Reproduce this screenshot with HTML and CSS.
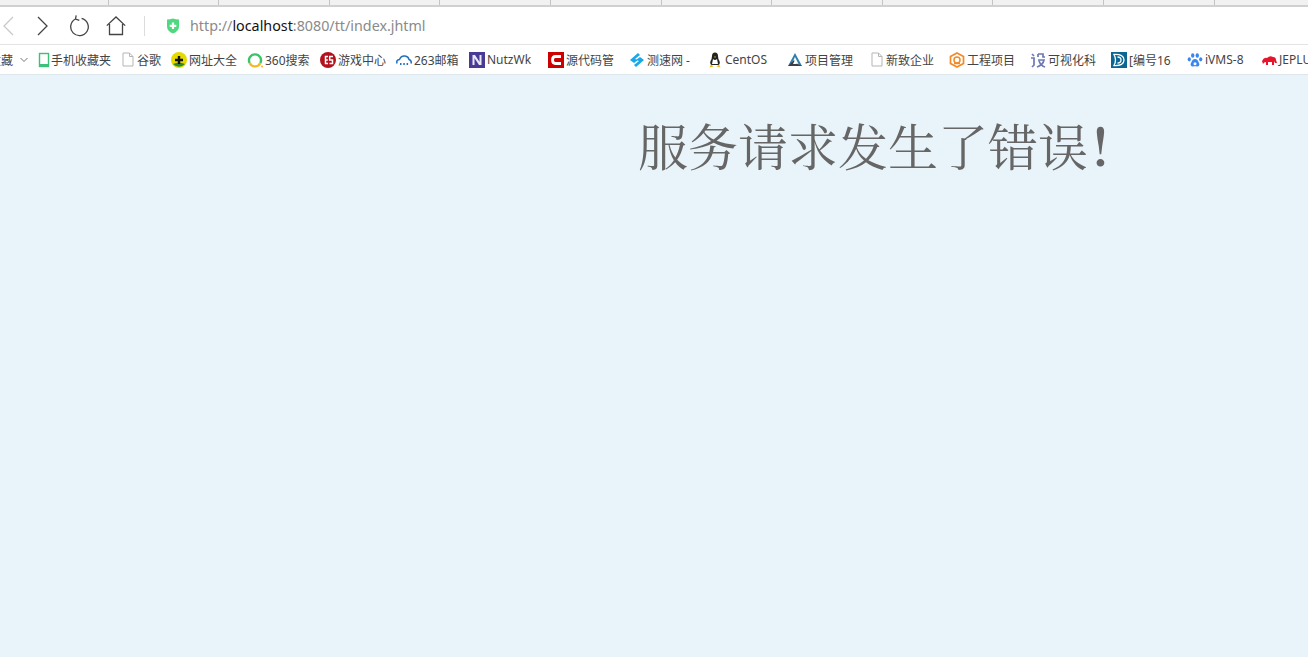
FILE: index.html
```html
<!DOCTYPE html>
<html lang="zh-CN">
<head>
<meta charset="utf-8">
<title>服务请求发生了错误</title>
<link rel="stylesheet" href="styles.css">
</head>
<body>
<div class="tabs">
  <div class="tab first"></div><div class="tab"></div><div class="tab"></div><div class="tab"></div><div class="tab"></div><div class="tab"></div><div class="tab"></div><div class="tab"></div><div class="tab"></div><div class="tab"></div><div class="tab"></div><div class="tab"></div>
</div>
<div class="toolbar">
  <svg class="nav back" width="16" height="22" viewBox="0 0 16 22"><path d="M12 2 3 11l9 9" fill="none" stroke="#c9c9c9" stroke-width="1.3"/></svg>
  <svg class="nav fwd" width="16" height="22" viewBox="0 0 16 22"><path d="M3 2l9 9-9 9" fill="none" stroke="#444" stroke-width="1.3"/></svg>
  <svg class="nav reload" width="20" height="22" viewBox="0 0 20 22"><path d="M6.500 4A8.800 8.800 0 1 0 12.600 3.300M7.200 .3 6.500 4l3.800 1.400" fill="none" stroke="#444" stroke-width="1.3"/></svg>
  <svg class="nav home" width="20" height="20" viewBox="0 0 20 20"><path d="M.8 9.600 10 1l9.200 8.600M3.500 8v10.500h13V8" fill="none" stroke="#444" stroke-width="1.300"/></svg>
  <div class="divider"></div>
  <svg class="shield" width="14" height="16" viewBox="0 0 14 16"><path d="M1 1.500Q4 1.500 7 .5Q10 1.500 13 1.500V8.500Q13 13 7 15.500Q1 13 1 8.500Z" fill="#4fd97f"/><path d="M7 4.500v6.500M3.700 7.800h6.600" stroke="#fff" stroke-width="2.200"/></svg>
  <div class="url"><span class="dim">http://</span><span class="host">localhost</span><span class="dim">:8080/tt/index.jhtml</span></div>
</div>
<div class="bookmarks">
  <div class="bm folder"><span>收藏</span><svg class="chev" width="8" height="6" viewBox="0 0 8 6"><path d="M.5 1 4 4.500 7.500 1" fill="none" stroke="#777"/></svg></div>
  <div class="bm"><svg class="ic narrow" width="12" height="16" viewBox="0 0 12 16"><rect x="1.500" y="1.500" width="9" height="13" fill="#fff" stroke="#3cc07a" stroke-width="1.400"/><rect x="1" y="12" width="10" height="3" fill="#3cc07a"/></svg><span>手机收藏夹</span></div>
  <div class="bm"><svg class="ic page" width="12" height="15" viewBox="0 0 12 15"><path d="M1 1h6.500L11 4.500V14H1ZM7.500 1v3.500H11" fill="#fff" stroke="#b5b5b5"/></svg><span>谷歌</span></div>
  <div class="bm"><svg class="ic" width="16" height="16" viewBox="0 0 16 16"><circle cx="8" cy="8" r="8" fill="#e5d900"/><path d="M2 12A8 8 0 0 0 14 12Q8 9 2 12Z" fill="#2a8a33"/><path d="M8 4v8M4 8h8" stroke="#111" stroke-width="2.400"/></svg><span>网址大全</span></div>
  <div class="bm"><svg class="ic" width="16" height="16" viewBox="0 0 16 16"><path d="M2.600 11A6 6 0 1 1 13.400 11" fill="none" stroke="#3cc46b" stroke-width="2.400"/><path d="M2.600 11A6 6 0 0 0 13.400 11" fill="none" stroke="#f5b922" stroke-width="2.400"/><circle cx="15" cy="14.500" r="1" fill="#f5b922"/></svg><span>360搜索</span></div>
  <div class="bm"><svg class="ic" width="16" height="16" viewBox="0 0 16 16"><circle cx="8" cy="8" r="8" fill="#b3121d"/><path d="M8 4.500H5.500v7H8M5.800 8h2M13 4.500H9.700v3.500H12.500v3.500H9.500" fill="none" stroke="#fff" stroke-width="1.500"/></svg><span>游戏中心</span></div>
  <div class="bm"><svg class="ic" width="16" height="16" viewBox="0 0 16 16"><path d="M1 11.500Q0 8 3.500 7.500Q5 3.500 9 4Q12.500 4.500 13 7.500Q16 8.500 15 11.500" fill="none" stroke="#1f70c1" stroke-width="1.500"/><path d="M4 12h1.500M7.300 12h1.500M10.600 12h1.500" stroke="#1f70c1" stroke-width="2"/></svg><span>263邮箱</span></div>
  <div class="bm"><svg class="ic" width="16" height="16" viewBox="0 0 16 16"><rect width="16" height="16" fill="#4b3a95"/><path d="M3.500 3h2v10h-2ZM3.500 3h2.500l6.500 10h-2.500ZM10.500 3h2v10h-2Z" fill="#e8e8f2"/></svg><span>NutzWk</span></div>
  <div class="bm"><svg class="ic" width="16" height="16" viewBox="0 0 16 16"><rect width="16" height="16" fill="#cc0000"/><path d="M13 4.500H7.500Q4.500 4.500 4.500 8T7.500 11.500H13" fill="none" stroke="#fff" stroke-width="2.800"/></svg><span>源代码管</span></div>
  <div class="bm"><svg class="ic" width="16" height="16" viewBox="0 0 16 16"><path d="M9 1 1 8l4 3 4-3-3-1 5-4ZM7 15l8-7-4-3-4 3 3 1-5 4Z" fill="#1aa7ea"/></svg><span>测速网 -</span></div>
  <div class="bm"><svg class="ic" width="16" height="16" viewBox="0 0 16 16"><path d="M8 .5Q5 .5 5 4Q5 7 3.500 9Q2.500 11.500 4 13H12Q13.500 11.500 12.500 9Q11 7 11 4Q11 .5 8 .5Z" fill="#222"/><path d="M6 7Q8 9 10 7L11 12H5Z" fill="#fff"/><path d="M2.500 15.500 4 12.500 6.500 14.500ZM13.500 15.500 12 12.500 9.500 14.500Z" fill="#f2b90f"/><path d="M7 4.500h2L8 6Z" fill="#f2b90f"/></svg><span>CentOS</span></div>
  <div class="bm"><svg class="ic" width="16" height="16" viewBox="0 0 16 16"><path d="M8 1 1 14h14Z" fill="#2f7fa8"/><path d="M8 5 4 13h8Z" fill="#fff"/><path d="M1 14 7 8l2 3 6 3Z" fill="#3c3c4a"/><path d="M8 8l-2 4h4Z" fill="#fff"/></svg><span>项目管理</span></div>
  <div class="bm"><svg class="ic page" width="12" height="15" viewBox="0 0 12 15"><path d="M1 1h6.500L11 4.500V14H1ZM7.500 1v3.500H11" fill="#fff" stroke="#b5b5b5"/></svg><span>新致企业</span></div>
  <div class="bm"><svg class="ic" width="16" height="16" viewBox="0 0 16 16"><path d="M8 1 14.500 4.500V11.500L8 15 1.500 11.500V4.500Z" fill="#fff" stroke="#f28a26" stroke-width="1.700"/><circle cx="8" cy="8" r="3" fill="none" stroke="#f28a26" stroke-width="1.500"/><path d="M5 11.500h6" stroke="#f28a26" stroke-width="1.500"/></svg><span>工程项目</span></div>
  <div class="bm"><svg class="ic" width="16" height="16" viewBox="0 0 16 16"><path d="M2 2l2 2M1 6h3v7l-2 2M8 2h5v3h2M8 2v3M8 8h6Q13 13 7 15M9 9q2 5 6 6" fill="none" stroke="#6d78b5" stroke-width="1.700"/></svg><span>可视化科</span></div>
  <div class="bm"><svg class="ic" width="16" height="16" viewBox="0 0 16 16"><rect width="16" height="16" fill="#0b6694"/><path d="M3 2.500Q13 2 13 8T3 13.500Q6 8 3 2.500Z" fill="none" stroke="#fff" stroke-width="1.300"/><path d="M6.500 5Q10 5 10 8T6.500 11" fill="none" stroke="#fff" stroke-width="1.300"/></svg><span>[编号16</span></div>
  <div class="bm"><svg class="ic" width="16" height="16" viewBox="0 0 16 16"><g fill="#3a86f0"><ellipse cx="5.700" cy="3.500" rx="1.700" ry="2.300"/><ellipse cx="10.300" cy="3.500" rx="1.700" ry="2.300"/><ellipse cx="2.300" cy="7.300" rx="1.600" ry="2.100"/><ellipse cx="13.700" cy="7.300" rx="1.600" ry="2.100"/><path d="M8 7Q5.500 7 4.500 10Q2.500 13 5 14.500Q8 14 11 14.500Q13.500 13 11.500 10Q10.500 7 8 7Z"/></g><circle cx="8" cy="11.700" r="1.500" fill="#fff"/></svg><span>iVMS-8</span></div>
  <div class="bm"><svg class="ic" width="16" height="16" viewBox="0 0 16 16"><path d="M1 9Q3 5 6 6Q9 3 12 5Q15 5 15 8L16 11H14L13 9V13H11V10H7V13H5V10Q3 10 2 12Z" fill="#e8142b"/></svg><span>JEPLUS</span></div>
</div>
<main class="page-body">
  <h1 class="error">服务请求发生了错误<span class="bang">！</span></h1>
</main>
</body>
</html>
```
FILE: styles.css
```css
* { box-sizing: border-box; }
html, body { margin: 0; height: 100%; overflow: hidden; }
body { display: flex; flex-direction: column; background: #e8f4f9; font-family: "Noto Sans", "Noto Sans CJK SC", sans-serif; }
.tabs { flex: 0 0 7px; display: flex; background: #f1f1f1; border-bottom: 2px solid #d0d0d0; overflow: hidden; }
.tab { flex: 0 0 110.600px; border-right: 1px solid #c4c4c4; }
.tab.first { flex-basis: 108.600px; }
.toolbar { flex: 0 0 38px; display: flex; align-items: center; background: #fff; border-bottom: 1px solid #e3e3e3; padding-left: 1px; }
.nav { flex: none; }
.fwd { margin-left: 18px; }
.reload { margin-left: 18px; }
.home { margin-left: 17px; }
.divider { width: 1px; height: 20px; background: #dcdcdc; margin-left: 18px; }
.shield { flex: none; margin-left: 21px; }
.url { margin-left: 10px; font-size: 14.300px; white-space: nowrap; color: #8a8a8a; }
.host { color: #111; }
.bookmarks { flex: 0 0 30px; display: grid; grid-template-columns: 38px 84px 49px 76px 73px 76px 73px 79px 81px 78px 80px 84px 78px 81px 81px 76px 74px 47px; align-items: center; background: #fff; border-bottom: 1px solid #dde6ea; overflow: hidden; font-size: 12px; color: #444; white-space: nowrap; }
.bm { display: flex; align-items: center; gap: 2px; min-width: 0; overflow: hidden; }
.bm.folder { justify-content: flex-end; gap: 7px; padding-right: 10px; }
.bm.folder span { flex: none; }
.chev { flex: none; }
.ic { flex: none; }
.ic.narrow { margin-right: -1px; }
.ic.page { margin-right: 1px; }
.page-body { flex: 1; padding: 41px 0 0 638px; }
.error { margin: 0; font-family: "Noto Serif CJK SC", "Liberation Serif", "Noto Sans CJK SC", serif; font-weight: 400; font-size: 50px; line-height: 56px; color: #666; white-space: nowrap; }
.bang { font-weight: 700; }
```
